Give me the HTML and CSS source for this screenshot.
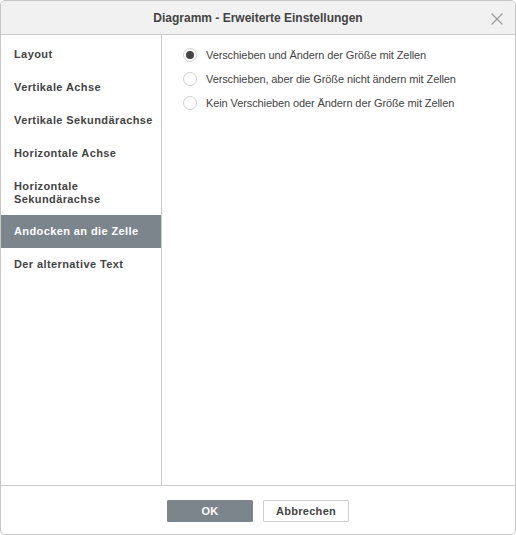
FILE: index.html
```html
<!DOCTYPE html>
<html lang="de">
<head>
<meta charset="utf-8">
<title>Diagramm - Erweiterte Einstellungen</title>
<link rel="stylesheet" href="styles.css">
</head>
<body>
<div class="dialog">
  <div class="header">
    <span class="title">Diagramm - Erweiterte Einstellungen</span>
    <svg class="close" width="12" height="12" viewBox="0 0 12 12"><path d="M0.5 0.5 L11.5 11.5 M11.5 0.5 L0.5 11.5" stroke="#9a9a9a" stroke-width="1.2" fill="none"/></svg>
  </div>
  <div class="body">
    <ul class="nav">
      <li>Layout</li>
      <li>Vertikale Achse</li>
      <li>Vertikale Sekundärachse</li>
      <li>Horizontale Achse</li>
      <li class="two">Horizontale<br>Sekundärachse</li>
      <li class="active">Andocken an die Zelle</li>
      <li>Der alternative Text</li>
    </ul>
    <div class="content">
      <label class="radio checked"><span class="dot"></span>Verschieben und Ändern der Größe mit Zellen</label>
      <label class="radio"><span class="dot"></span>Verschieben, aber die Größe nicht ändern mit Zellen</label>
      <label class="radio"><span class="dot"></span>Kein Verschieben oder Ändern der Größe mit Zellen</label>
    </div>
  </div>
  <div class="footer">
    <button class="btn primary">OK</button>
    <button class="btn">Abbrechen</button>
  </div>
</div>
</body>
</html>
```
FILE: styles.css
```css
html, body {
  margin: 0;
  padding: 0;
  background: #fff;
}
body {
  font-family: Arial, "Liberation Sans", sans-serif;
  color: #444;
}
.dialog {
  box-sizing: border-box;
  width: 516px;
  height: 535px;
  border: 1px solid #c6c6c6;
  border-radius: 5px;
  display: flex;
  flex-direction: column;
  overflow: hidden;
}
.header {
  height: 33px;
  flex: none;
  background: #f1f1f1;
  border-bottom: 1px solid #cbcbcb;
  display: flex;
  align-items: center;
  justify-content: center;
  position: relative;
}
.title {
  font-size: 12px;
  font-weight: bold;
  color: #444;
  margin-top: 1px;
}
.close {
  position: absolute;
  right: 12px;
  top: 12px;
}
.body {
  flex: 1;
  display: flex;
  min-height: 0;
}
.nav {
  list-style: none;
  margin: 0;
  padding: 3px 0 0 0;
  width: 160px;
  flex: none;
  border-right: 1px solid #cbcbcb;
}
.nav li {
  font-size: 11px;
  font-weight: bold;
  line-height: 13px;
  padding: 10px 0 10px 13px;
  color: #444;
  letter-spacing: 0.4px;
  white-space: nowrap;
}
.nav li.two {
  line-height: 12.5px;
}
.nav li.active {
  background: #7d858c;
  color: #fff;
}
.content {
  flex: 1;
  padding: 13px 0 0 21px;
  display: flex;
  flex-direction: column;
  gap: 10px;
}
.radio {
  display: flex;
  align-items: center;
  font-size: 11px;
  line-height: 14px;
  color: #444;
  letter-spacing: -0.1px;
}
.dot {
  box-sizing: border-box;
  width: 14px;
  height: 14px;
  border: 1px solid #cfcfcf;
  border-radius: 50%;
  margin-right: 9px;
  display: flex;
  align-items: center;
  justify-content: center;
}
.radio.checked .dot::after {
  content: "";
  width: 8px;
  height: 8px;
  border-radius: 50%;
  background: #444;
}
.footer {
  height: 49px;
  flex: none;
  border-top: 1px solid #cbcbcb;
  display: flex;
  justify-content: center;
  align-items: flex-start;
  gap: 10px;
  padding-top: 14px;
  box-sizing: border-box;
}
.btn {
  box-sizing: border-box;
  width: 86px;
  height: 22px;
  border: 1px solid #cfcfcf;
  background: #fff;
  color: #444;
  font-family: Arial, "Liberation Sans", sans-serif;
  font-size: 11px;
  font-weight: bold;
  letter-spacing: 0.3px;
  padding: 0;
  border-radius: 1px;
}
.btn.primary {
  background: #7d858c;
  border-color: #7d858c;
  color: #fff;
}
```
